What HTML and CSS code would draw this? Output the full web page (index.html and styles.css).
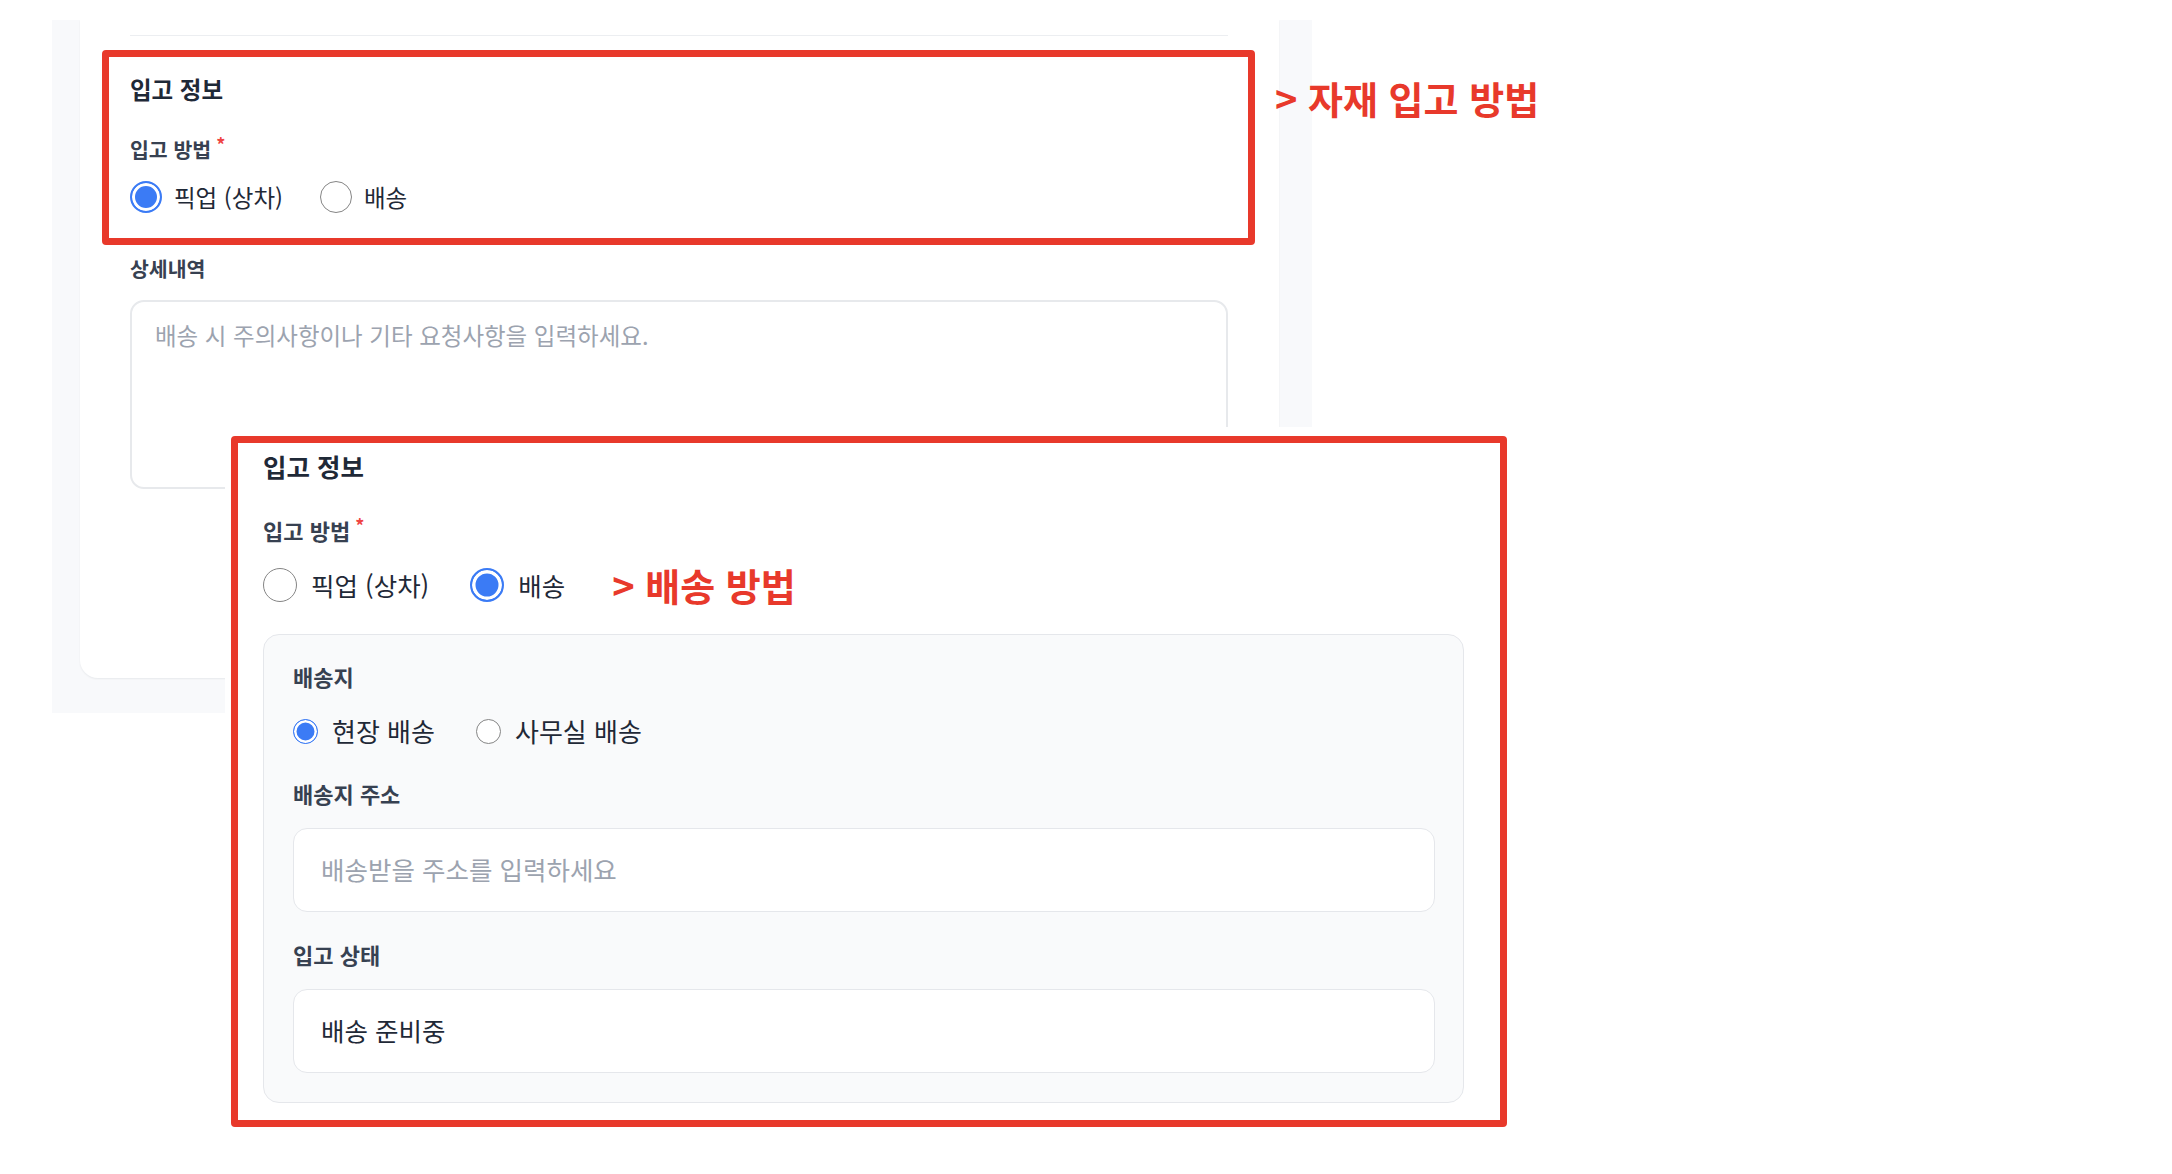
FILE: index.html
```html
<!DOCTYPE html>
<html lang="ko">
<head>
<meta charset="utf-8">
<title>입고 정보</title>
<link rel="stylesheet" href="styles.css">
</head>
<body>
<div class="page">
  <div class="back">
    <div class="card">
      <div class="divider"></div>
      <section class="mark mark--a">
        <h2 class="title">입고 정보</h2>
        <div class="label">입고 방법<span class="req">*</span></div>
        <div class="radios">
          <div class="opt"><span class="radio on"></span>픽업 (상차)</div>
          <div class="opt"><span class="radio"></span>배송</div>
        </div>
      </section>
      <div class="label label--detail">상세내역</div>
      <div class="textarea">배송 시 주의사항이나 기타 요청사항을 입력하세요.</div>
    </div>
  </div>

  <div class="note note--a">&gt; 자재 입고 방법</div>

  <div class="overlay">
    <section class="mark mark--b">
      <h2 class="title">입고 정보</h2>
      <div class="label">입고 방법<span class="req">*</span></div>
      <div class="radios">
        <div class="opt"><span class="radio"></span>픽업 (상차)</div>
        <div class="opt"><span class="radio on"></span>배송</div>
        <div class="note note--b">&gt; 배송 방법</div>
      </div>
      <div class="panel">
        <div class="sub-label">배송지</div>
        <div class="radios radios--sub">
          <div class="opt"><span class="radio on"></span>현장 배송</div>
          <div class="opt"><span class="radio"></span>사무실 배송</div>
        </div>
        <div class="sub-label sub-label--gap">배송지 주소</div>
        <div class="input placeholder">배송받을 주소를 입력하세요</div>
        <div class="sub-label sub-label--gap2">입고 상태</div>
        <div class="input">배송 준비중</div>
      </div>
    </section>
  </div>
</div>
</body>
</html>
```

FILE: styles.css
```css
* {
  box-sizing: border-box;
  margin: 0;
  padding: 0;
}

body {
  margin: 0;
  background: #ffffff;
  font-family: "Noto Sans CJK KR", "Noto Sans", sans-serif;
  color: #1f2937;
}

.page {
  position: relative;
  width: 2172px;
  height: 1174px;
  overflow: hidden;
}

/* background screenshot */
.back {
  margin: 20px 0 0 52px;
  width: 1260px;
  height: 693px;
  background: #f8f9fb;
  padding: 0 33px 0 28px;
}

.card {
  height: 658px;
  background: #ffffff;
  border-radius: 0 0 18px 18px;
  box-shadow: 0 1px 2px rgba(17, 24, 39, 0.07);
  padding: 15px 51px 0 50px;
}

.divider {
  height: 1px;
  background: #eceef1;
}

.mark {
  border: 7px solid #e8392b;
  border-radius: 4px;
}

.mark--a {
  margin: 14px -27px 0 -28px;
  padding: 16px 20px 25px 21px;
}

.title {
  font-size: 23.5px;
  line-height: 32px;
  font-weight: 700;
  color: #1f2937;
}

.label {
  margin-top: 30px;
  font-size: 20.5px;
  line-height: 28px;
  font-weight: 700;
  color: #374151;
}

.req {
  color: #ef4444;
  font-size: 18px;
  vertical-align: top;
  line-height: 18px;
  margin-left: 5px;
}

.radios {
  display: flex;
  align-items: center;
  gap: 37px;
  margin-top: 18px;
  height: 32px;
}

.opt {
  display: flex;
  align-items: center;
  gap: 12px;
  font-size: 23.5px;
  line-height: 32px;
  color: #1f2937;
}

.radio {
  flex: none;
  width: 32px;
  height: 32px;
  border-radius: 50%;
  border: 1.5px solid #858585;
  background: #ffffff;
}

.radio.on {
  border: 2px solid #3b7bf5;
  background: #3b7bf5;
  box-shadow: inset 0 0 0 3px #ffffff;
}

.label--detail {
  margin-top: 9px;
}

.textarea {
  margin-top: 18px;
  height: 189px;
  border: 2px solid #e7e9ec;
  border-radius: 14px;
  padding: 16px 23px;
  font-size: 23.5px;
  line-height: 34px;
  color: #9ca3af;
}

/* annotations */
.note {
  font-size: 38px;
  line-height: 38px;
  font-weight: 700;
  color: #e8392b;
  white-space: nowrap;
}

.note--a {
  position: absolute;
  left: 1275px;
  top: 79px;
}

.note--b {
  margin-left: 6px;
}

/* overlaid screenshot */
.overlay {
  position: absolute;
  left: 225px;
  top: 427px;
  background: #ffffff;
  padding: 9px 8px 8px 6px;
}

.mark--b {
  width: 1276px;
  padding: 7px 36px 17px 25px;
}

.mark--b .title {
  font-size: 25.5px;
}

.mark--b .label {
  margin-top: 34px;
  font-size: 22px;
}

.mark--b .radios {
  margin-top: 24px;
  height: 34px;
  gap: 41px;
}

.mark--b .opt {
  gap: 14px;
  font-size: 25.5px;
}

.mark--b .radio {
  width: 34px;
  height: 34px;
}

.mark--b .radio.on {
  box-shadow: inset 0 0 0 3.5px #ffffff;
}

.panel {
  margin-top: 32px;
  border: 1px solid #e5e7eb;
  border-radius: 16px;
  background: #f9fafb;
  padding: 27px 28px 29px 29px;
}

.sub-label {
  font-size: 22px;
  line-height: 28px;
  font-weight: 700;
  color: #374151;
}

.sub-label--gap {
  margin-top: 35px;
}

.sub-label--gap2 {
  margin-top: 28px;
}

.mark--b .radios--sub {
  margin-top: 28px;
  height: 26px;
  gap: 41px;
}

.mark--b .radios--sub .opt {
  font-size: 26px;
  gap: 14px;
}

.mark--b .radios--sub .radio {
  width: 25px;
  height: 25px;
}

.mark--b .radios--sub .radio.on {
  border-width: 1.5px;
  box-shadow: inset 0 0 0 2.5px #ffffff;
}

.input {
  margin-top: 21px;
  height: 84px;
  border: 1.5px solid #e5e7eb;
  border-radius: 14px;
  background: #ffffff;
  padding: 0 27px 4px;
  display: flex;
  align-items: center;
  font-size: 25.5px;
  color: #1f2937;
}

.input.placeholder {
  color: #9ca3af;
}
```
